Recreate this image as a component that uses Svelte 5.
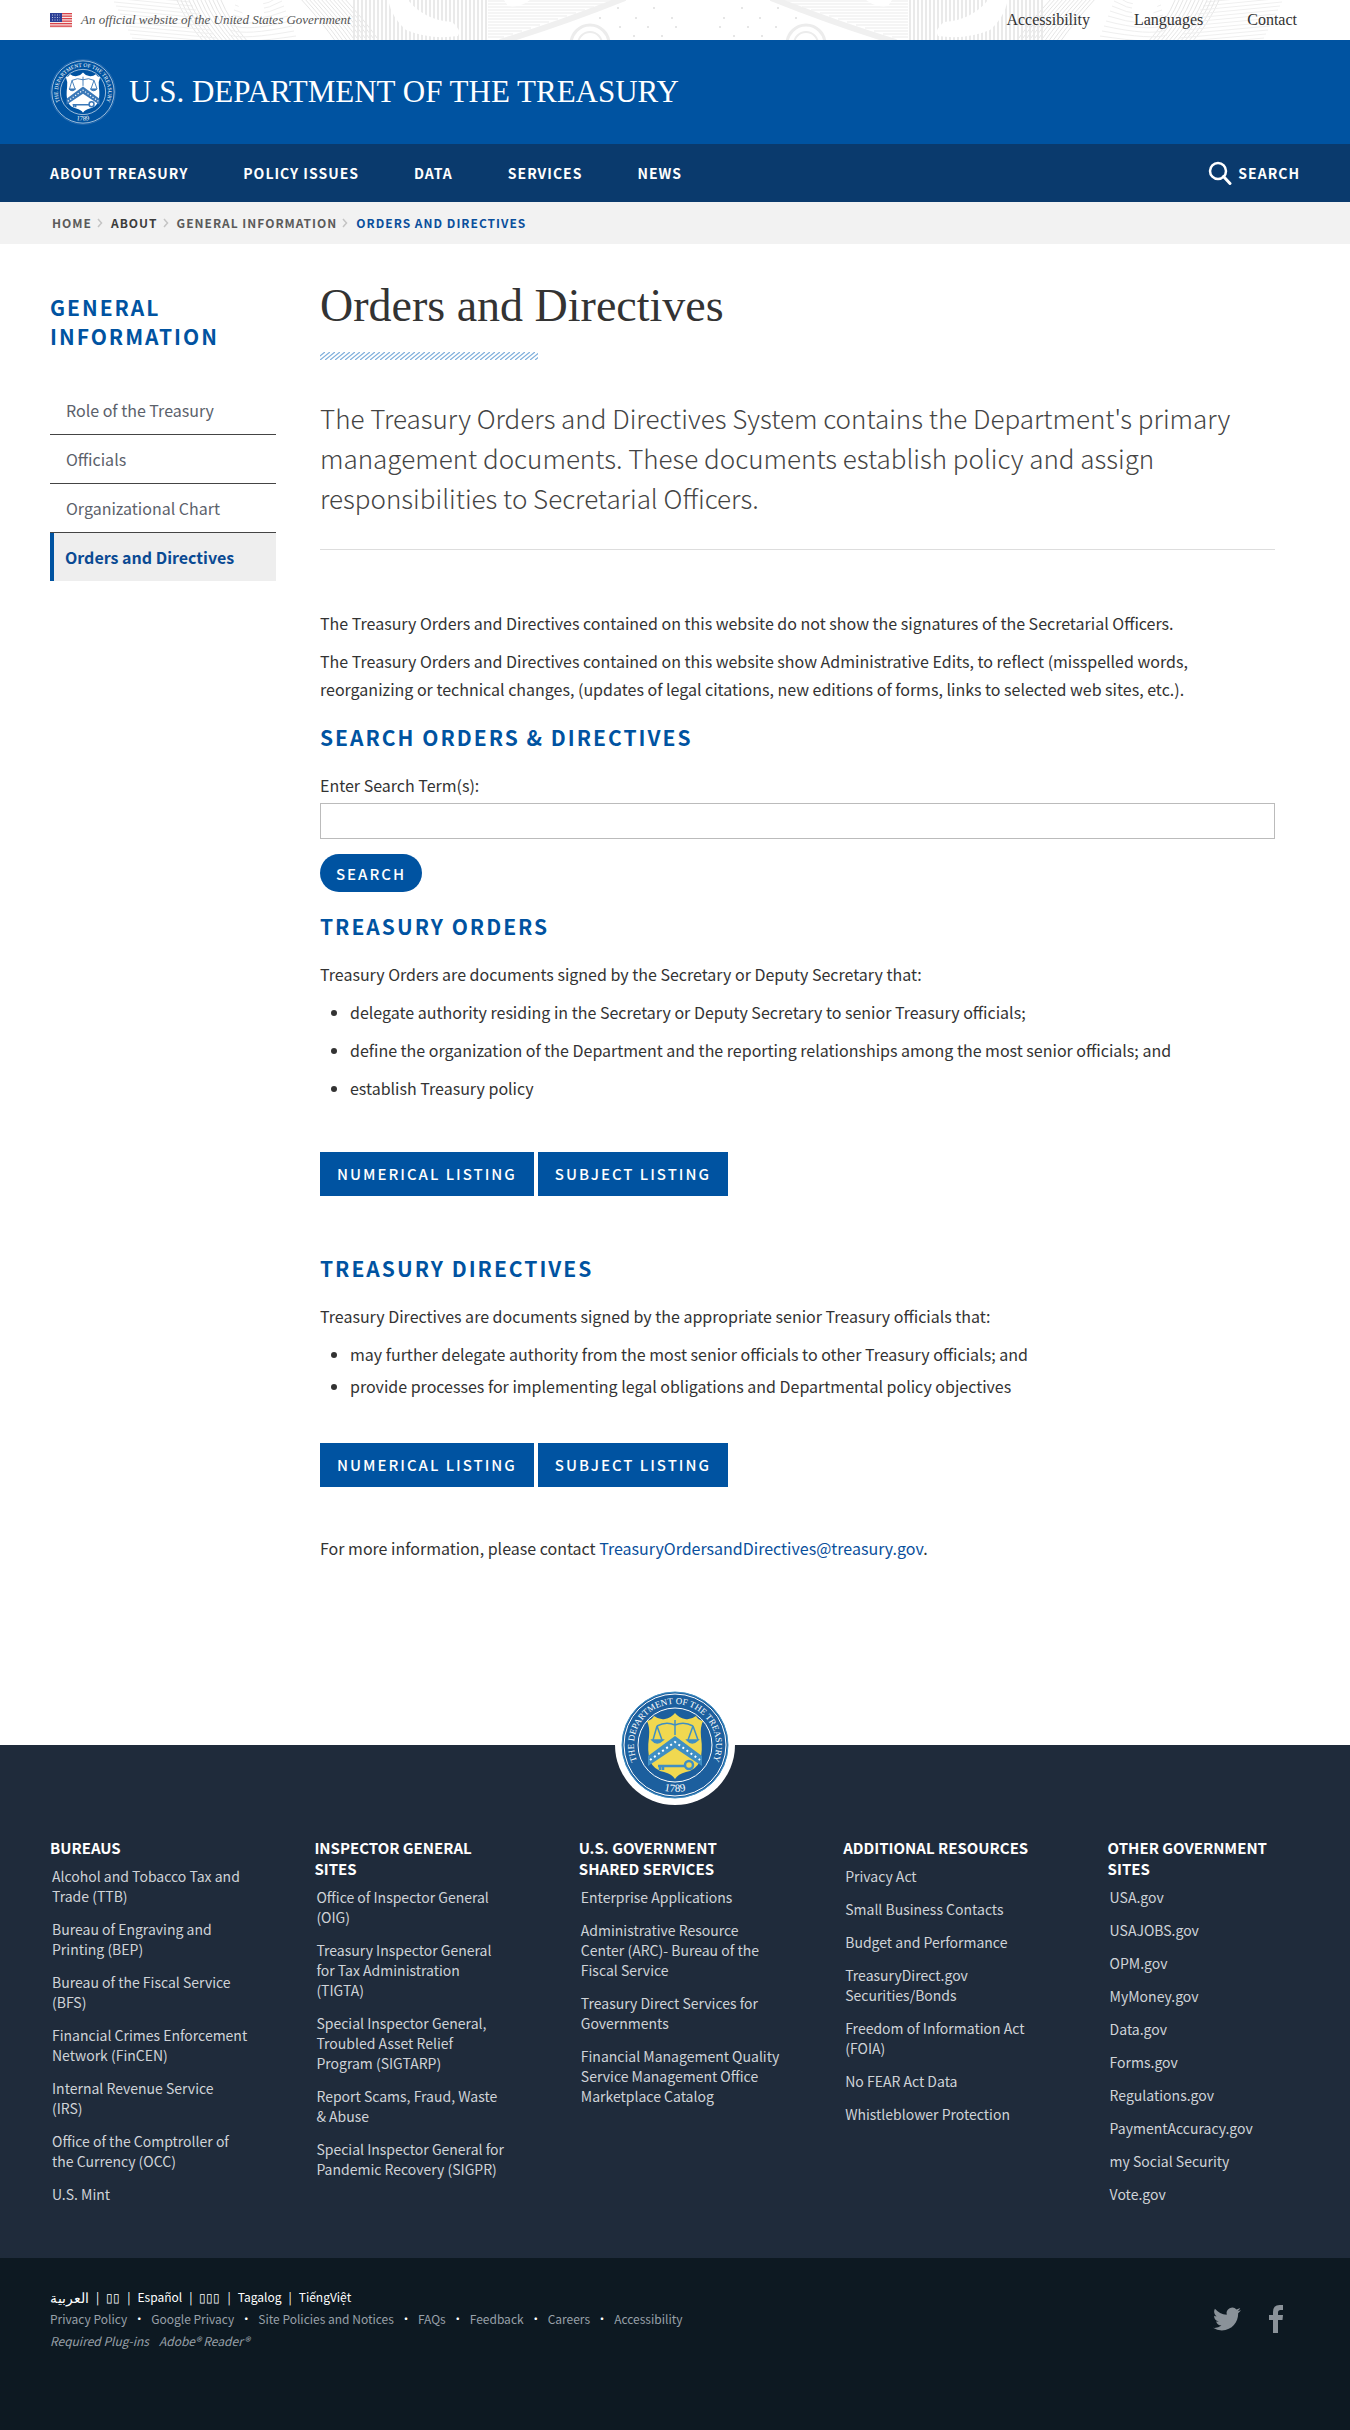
<script>
  const utility = ['Accessibility', 'Languages', 'Contact'];
  const nav = ['About Treasury', 'Policy Issues', 'Data', 'Services', 'News'];
  const crumbs = ['Home', 'About', 'General Information'];
  const side = ['Role of the Treasury', 'Officials', 'Organizational Chart', 'Orders and Directives'];
  const columns = [
    { title: 'Bureaus', links: ['Alcohol and Tobacco Tax and\nTrade (TTB)', 'Bureau of Engraving and\nPrinting (BEP)', 'Bureau of the Fiscal Service\n(BFS)', 'Financial Crimes Enforcement\nNetwork (FinCEN)', 'Internal Revenue Service\n(IRS)', 'Office of the Comptroller of\nthe Currency (OCC)', 'U.S. Mint'] },
    { title: 'Inspector General\nSites', links: ['Office of Inspector General\n(OIG)', 'Treasury Inspector General\nfor Tax Administration\n(TIGTA)', 'Special Inspector General,\nTroubled Asset Relief\nProgram (SIGTARP)', 'Report Scams, Fraud, Waste\n& Abuse', 'Special Inspector General for\nPandemic Recovery (SIGPR)'] },
    { title: 'U.S. Government\nShared Services', links: ['Enterprise Applications', 'Administrative Resource\nCenter (ARC)- Bureau of the\nFiscal Service', 'Treasury Direct Services for\nGovernments', 'Financial Management Quality\nService Management Office\nMarketplace Catalog'] },
    { title: 'Additional Resources', links: ['Privacy Act', 'Small Business Contacts', 'Budget and Performance', 'TreasuryDirect.gov\nSecurities/Bonds', 'Freedom of Information Act\n(FOIA)', 'No FEAR Act Data', 'Whistleblower Protection'] },
    { title: 'Other Government\nSites', links: ['USA.gov', 'USAJOBS.gov', 'OPM.gov', 'MyMoney.gov', 'Data.gov', 'Forms.gov', 'Regulations.gov', 'PaymentAccuracy.gov', 'my Social Security', 'Vote.gov'] }
  ];
  const languages = ['العربية', '▯▯', 'Español', '▯▯▯', 'Tagalog', 'TiếngViệt'];
  const policies = ['Privacy Policy', 'Google Privacy', 'Site Policies and Notices', 'FAQs', 'Feedback', 'Careers', 'Accessibility'];
  const range = (n) => Array.from({ length: n }, (_, i) => i);
</script>

{#snippet seal(id, ring, ink, shield, mark)}
  <svg class="seal" viewBox="0 0 108 108" aria-hidden="true">
    <defs>
      <path id="{id}-top" d="M25 83 A41 41 0 1 1 83 83" />
      <path id="{id}-low" d="M35 97 A47 47 0 0 0 73 97" />
    </defs>
    <circle cx="54" cy="54" r="53" fill={ring} stroke={mark} stroke-width="1" />
    <circle cx="54" cy="54" r="51" fill="none" stroke={ink} stroke-width="1" />
    <circle cx="54" cy="54" r="37" fill="none" stroke={ink} stroke-width="1" />
    <text class="seal-text" fill={ink}><textPath href="#{id}-top" startOffset="50%" text-anchor="middle">THE DEPARTMENT OF THE TREASURY</textPath></text>
    <text class="seal-year" fill={ink}><textPath href="#{id}-low" startOffset="50%" text-anchor="middle">1789</textPath></text>
    <path fill={shield} d="M26 30 Q31 29 33 25 Q38 29 44 28 Q50 27 54 22 Q58 27 64 28 Q70 29 75 25 Q77 29 82 30 Q79 36 80 46 Q82 60 79 70 Q75 79 65 81 Q57 83 54 88 Q51 83 43 81 Q33 79 29 70 Q26 60 28 46 Q29 36 26 30Z" />
    <path fill={mark} d="M54 45 L81 65 V75 L54 57 L27 75 V65Z" />
    <path fill="none" stroke={ink} stroke-width="2" stroke-dasharray="2 3" d="M29 69 L54 51 L79 69" />
    <g fill="none" stroke={mark} stroke-width="1.500">
      <path d="M36 35 Q45 30 54 34 Q63 30 72 35 M54 29 V44 M36 35 L32 49 M36 35 L41 49 M72 35 L67 49 M72 35 L77 49" />
      <path d="M31 49 H42 Q36 55 31 49Z M66 49 H77 Q71 55 66 49Z" fill={mark} />
      <path d="M37 75 H64 M39 75 V79 M42 75 V79" stroke-width="2.500" />
      <circle cx="68" cy="74" r="4" stroke-width="2.500" />
    </g>
  </svg>
{/snippet}

{#snippet engravingHalf()}
  <g fill="none" stroke="#e6e6e6">
    {#each range(12) as i}
      <path d="M{110 + i * 2} {i * 4 - 6} L{190 + i * 3} {i * 4 + 2}" stroke="#f0f0f0" />
      <path d="M{176 + i * 4} -2 Q{186 + i * 4} 22 {204 + i * 4} 42" />
      <path d="M{300 + i * 4} -2 Q{322 + i * 4} 22 {336 + i * 4} 42" />
    {/each}
    {#each range(9) as i}
      <path d="M{236 - i} {i * 5} Q{258 - i * 2} {i * 4 + 12} {280 + i * 2} {i * 5 - 4}" stroke="#efefef" />
    {/each}
    {#each range(34) as i}
      <path d="M{354 + i * 4} 0 V40" stroke="#eaeaea" stroke-width="2" />
    {/each}
    {#each range(13) as i}
      <path d="M488 {i * 3 + 1} H{612 - i * 9}" stroke="#ebebeb" />
    {/each}
    <path d="M500 42 Q560 24 625 -2" stroke="#f0f0f0" stroke-width="6" />
    <circle cx="590" cy="44" r="19" stroke-width="3" stroke="#ececec" />
    <circle cx="590" cy="44" r="12" stroke-width="2" stroke="#ececec" />
  </g>
  <g fill="#ffffff">
    <path d="M388 0 H408 Q424 20 452 22 Q462 30 458 36 Q430 40 406 30 Q392 18 388 0Z" />
    <path d="M504 0 H530 Q520 8 508 6Z M236 0 H262 Q268 14 258 26 Q242 18 236 0Z" />
  </g>
  <g fill="#dedede">
    {#each range(5) as i}
      <circle cx={600 + i * 18} cy={i % 2 ? 8 : 18} r="1" />
      <circle cx={620 + i * 14} cy={i % 2 ? 36 : 27} r="1" />
    {/each}
  </g>
{/snippet}

<div class="topbar">
  <svg class="engraving" viewBox="0 0 1350 40" preserveAspectRatio="xMidYMid slice" aria-hidden="true">
    {@render engravingHalf()}
    <g transform="translate(1396 0) scale(-1 1)">{@render engravingHalf()}</g>
  </svg>
  <div class="wrap topbar-row">
    <p class="official">
      <svg class="flag" viewBox="0 0 22 15" aria-hidden="true">
        <rect width="22" height="15" fill="#f7e9e6" />
        {#each range(6) as i}
          <rect y={i * 2.5} width="22" height="1.300" fill="#d9434a" />
        {/each}
        <rect width="12" height="9" fill="#2c3f96" />
        <path d="M2 2h8M2 4.500h8M2 7h8" stroke="#ffffff" stroke-width=".7" stroke-dasharray="1 1.500" />
      </svg>
      An official website of the United States Government
    </p>
    <nav class="utility" aria-label="Utility">
      {#each utility as item}<a href="#top">{item}</a>{/each}
    </nav>
  </div>
</div>

<header class="masthead">
  <a class="wrap brand" href="#top">
    {@render seal('crest', '#0053a1', '#ffffff', '#ffffff', '#3a78b8')}
    <span>U.S. DEPARTMENT OF THE TREASURY</span>
  </a>
</header>

<nav class="mainnav" aria-label="Main">
  <div class="wrap mainnav-row">
    {#each nav as item}<a href="#top">{item}</a>{/each}
    <button class="find" type="button">
      <svg viewBox="0 0 24 24" aria-hidden="true"><circle cx="10" cy="10" r="8" fill="none" stroke="currentColor" stroke-width="2.500" /><path d="M15.500 15.500 L22 22.500" stroke="currentColor" stroke-width="3" stroke-linecap="round" /></svg>
      Search
    </button>
  </div>
</nav>

<nav class="crumbs" aria-label="Breadcrumb">
  <ol class="wrap">
    {#each crumbs as item, i}
      <li class:dark={i === 1}><a href="#top">{item}</a><svg viewBox="0 0 6 10" aria-hidden="true"><path d="M1 1 L4.500 5 L1 9" fill="none" stroke="#c4c4c4" stroke-width="1.500" /></svg></li>
    {/each}
    <li class="here" aria-current="page">Orders and Directives</li>
  </ol>
</nav>

<div class="wrap body">
  <aside>
    <h2>General Information</h2>
    <ul>
      {#each side as item, i}
        <li><a class:active={i === 3} href="#top">{item}</a></li>
      {/each}
    </ul>
  </aside>

  <main>
    <h1>Orders and Directives</h1>
    <svg class="hatch" aria-hidden="true">
      <defs><pattern id="hatching" width="5" height="8" patternUnits="userSpaceOnUse"><path d="M-5 8 L5 0 M0 8 L10 0" stroke="#7fafdc" stroke-width="1.300" /></pattern></defs>
      <rect width="100%" height="100%" fill="url(#hatching)" />
    </svg>
    <p class="lede">The Treasury Orders and Directives System contains the Department's primary management documents. These documents establish policy and assign responsibilities to Secretarial Officers.</p>
    <hr />
    <p>The Treasury Orders and Directives contained on this website do not show the signatures of the Secretarial Officers.</p>
    <p>The Treasury Orders and Directives contained on this website show Administrative Edits, to reflect (misspelled words, reorganizing or technical changes, (updates of legal citations, new editions of forms, links to selected web sites, etc.).</p>

    <h2>Search Orders &amp; Directives</h2>
    <form onsubmit={(e) => e.preventDefault()}>
      <label for="terms">Enter Search Term(s):</label>
      <input id="terms" type="text" />
      <button class="pill" type="submit">Search</button>
    </form>

    <h2>Treasury Orders</h2>
    <p>Treasury Orders are documents signed by the Secretary or Deputy Secretary that:</p>
    <ul class="loose">
      <li>delegate authority residing in the Secretary or Deputy Secretary to senior Treasury officials;</li>
      <li>define the organization of the Department and the reporting relationships among the most senior officials; and</li>
      <li>establish Treasury policy</li>
    </ul>
    <div class="buttons"><a href="#top">Numerical Listing</a><a href="#top">Subject Listing</a></div>

    <h2>Treasury Directives</h2>
    <p>Treasury Directives are documents signed by the appropriate senior Treasury officials that:</p>
    <ul class="tight">
      <li>may further delegate authority from the most senior officials to other Treasury officials; and</li>
      <li>provide processes for implementing legal obligations and Departmental policy objectives</li>
    </ul>
    <div class="buttons"><a href="#top">Numerical Listing</a><a href="#top">Subject Listing</a></div>

    <p class="contact">For more information, please contact <a href="mailto:TreasuryOrdersandDirectives@treasury.gov">TreasuryOrdersandDirectives@treasury.gov</a>.</p>
  </main>
</div>

<footer>
  <div class="badge">{@render seal('medal', '#1c5f9e', '#ffffff', '#f0d850', '#3f8fc4')}</div>
  <div class="wrap columns">
    {#each columns as col}
      <section>
        <h3>{col.title}</h3>
        <ul>
          {#each col.links as link}<li><a href="#top">{link}</a></li>{/each}
        </ul>
      </section>
    {/each}
  </div>
  <div class="legal">
    <div class="wrap legal-row">
      <div>
        <p class="langs">{#each languages as item, i}{#if i}<span>|</span>{/if}<a class:arabic={i === 0} href="#top">{item}</a>{/each}</p>
        <p class="policies">{#each policies as item, i}{#if i}<span>•</span>{/if}<a href="#top">{item}</a>{/each}</p>
        <p class="plugins"><span>Required Plug-ins</span><a href="#top">Adobe® Reader®</a></p>
      </div>
      <div class="social">
        <a href="#top" aria-label="Twitter"><svg width="28" height="28" viewBox="0 0 24 24" aria-hidden="true"><path fill="currentColor" d="M23.950 4.570a10 10 0 0 1-2.820.770 4.960 4.960 0 0 0 2.160-2.720c-.95.550-2 .95-3.130 1.180a4.920 4.920 0 0 0-8.380 4.480C7.690 8.100 4.070 6.130 1.640 3.160a4.820 4.820 0 0 0-.67 2.480c0 1.710.87 3.210 2.190 4.100a4.900 4.900 0 0 1-2.230-.62v.06a4.920 4.920 0 0 0 3.950 4.830 5 5 0 0 1-2.210.08 4.940 4.940 0 0 0 4.600 3.420A9.870 9.870 0 0 1 0 19.540a13.990 13.990 0 0 0 7.560 2.210c9.050 0 14-7.500 14-13.980 0-.21 0-.42-.02-.63a9.940 9.940 0 0 0 2.460-2.550z" /></svg></a>
        <a href="#top" aria-label="Facebook"><svg width="14" height="28" viewBox="0 0 14 28" aria-hidden="true"><path fill="currentColor" d="M4 28 V15 H0 V10 H4 V7 Q4 0 10.500 0 H14 V5 H11.500 Q9 5 9 7.500 V10 H14 L13.500 15 H9 V28Z" /></svg></a>
      </div>
    </div>
  </div>
</footer>

<style>
  :global(body) { background: #ffffff; }
  :global(#app) { font-family: "Noto Sans CJK SC", "Noto Sans", sans-serif; font-size: 16px; line-height: 28px; color: #333333; }
  a { color: inherit; text-decoration: none; }
  h1, h2, h3, p, ul, ol { margin: 0; padding: 0; font-weight: 400; }
  ul, ol { list-style: none; }
  button { font-family: inherit; border: 0; cursor: pointer; }
  .wrap { box-sizing: border-box; padding-left: 50px; padding-right: 50px; }

  .topbar { position: relative; overflow: hidden; background: #ffffff; }
  .engraving { position: absolute; inset: 0; width: 100%; height: 100%; }
  .topbar-row { position: relative; display: flex; justify-content: space-between; align-items: center; height: 40px; padding-right: 53px; font-family: "Liberation Serif", serif; }
  .official { display: flex; align-items: center; gap: 9px; font-size: 13px; font-style: italic; color: #555555; }
  .flag { width: 22px; height: 15px; }
  .utility { display: flex; gap: 44px; font-size: 16px; color: #333333; }

  .masthead { background: #0053a1; color: #ffffff; }
  .brand { display: flex; align-items: center; gap: 13px; height: 104px; font-family: "Liberation Serif", serif; font-size: 31px; }
  .seal { display: block; width: 66px; height: 66px; }
  .seal-text { font-family: "Liberation Serif", serif; font-size: 9px; }
  .seal-year { font-family: "Liberation Serif", serif; font-size: 11px; }

  .mainnav { background: #0a3a6d; color: #ffffff; }
  .mainnav-row { display: flex; align-items: center; gap: 55px; height: 58px; font-size: 14px; font-weight: 700; letter-spacing: 1px; text-transform: uppercase; }
  .find { display: flex; align-items: center; gap: 6px; margin-left: auto; padding: 0; background: none; color: inherit; font-size: 14px; font-weight: 700; letter-spacing: 1px; text-transform: uppercase; }
  .find svg { width: 24px; height: 24px; }

  .crumbs { background: #f2f2f2; }
  .crumbs ol { display: flex; align-items: center; gap: 8px; height: 42px; padding-left: 52px; font-size: 12px; font-weight: 700; letter-spacing: 1px; text-transform: uppercase; color: #5b5b5b; }
  .crumbs li { display: flex; align-items: center; gap: 5px; }
  .crumbs svg { width: 6px; height: 10px; }
  .crumbs .dark { color: #3c3c3c; }
  .crumbs .here { color: #0a4f9c; }

  .body { display: grid; grid-template-columns: 226px 1fr; gap: 44px; padding-right: 75px; }
  aside { padding-top: 49px; }
  h2 { font-size: 21px; line-height: 29px; font-weight: 700; letter-spacing: 2px; text-transform: uppercase; color: #0053a1; }
  aside h2 { margin-bottom: 35px; }
  aside a { display: block; padding: 10px 16px; font-size: 16px; color: #5b616b; }
  aside li + li { border-top: 1px solid #444444; }
  aside .active { padding-left: 11px; border-left: 4px solid #0053a1; background: #eeeeee; color: #0a4a93; font-weight: 700; }

  main { padding-top: 34px; padding-bottom: 183px; }
  h1 { font-family: "Liberation Serif", serif; font-size: 46px; line-height: 56px; color: #333333; }
  .hatch { display: block; width: 218px; height: 8px; margin-top: 18px; }
  .lede { margin-top: 38px; font-size: 26px; line-height: 40px; font-weight: 300; color: #444444; }
  hr { margin: 31px 0 59px; border: 0; border-top: 1px solid #dddddd; }
  main p + p { margin-top: 10px; }
  main h2 { margin: 20px 0 19px; }
  form { display: flex; flex-direction: column; align-items: flex-start; }
  input { box-sizing: border-box; width: 100%; height: 36px; margin: 4px 0 15px; border: 1px solid #bbbbbb; background: #ffffff; font: inherit; }
  .pill { height: 38px; padding: 0 16px; border-radius: 19px; background: #0053a1; color: #ffffff; font-size: 15px; font-weight: 500; letter-spacing: 2px; text-transform: uppercase; }
  main ul { padding-left: 30px; list-style: disc; }
  .loose li { margin-top: 10px; }
  .tight { margin-top: 10px; }
  .tight li + li { margin-top: 4px; }
  .buttons { display: flex; gap: 4px; margin-top: 50px; }
  .tight + .buttons { margin-top: 43px; }
  .buttons + h2 { margin-top: 58px; }
  .buttons a { padding: 8px 17px; background: #0053a1; color: #ffffff; font-size: 15px; font-weight: 500; letter-spacing: 2px; text-transform: uppercase; }
  .contact { margin-top: 47px; }
  .contact a { color: #0a4f9c; }

  footer { position: relative; background: #1f2b3b; color: #ffffff; }
  .badge { position: absolute; top: 0; left: 50%; padding: 6px; border-radius: 50%; background: #ffffff; transform: translate(-50%, -50%); }
  .badge .seal { width: 108px; height: 108px; }
  .columns { display: grid; grid-template-columns: repeat(5, 1fr); gap: 50px; padding-top: 92px; padding-bottom: 54px; padding-right: 28px; white-space: pre-line; }
  h3 { font-size: 15px; line-height: 21px; font-weight: 700; text-transform: uppercase; }
  section ul { padding: 8px 0 0 2px; font-size: 14px; line-height: 20px; color: #cfd3d8; }
  section li + li { margin-top: 13px; }
  .legal { background: #0d1922; }
  .legal-row { display: flex; justify-content: space-between; padding-top: 28px; padding-bottom: 79px; padding-right: 67px; font-size: 12px; line-height: 22px; }
  .langs, .policies, .plugins { display: flex; align-items: center; gap: 7px; height: 22px; }
  .langs .arabic { font-size: 14px; }
  .policies { gap: 6px; }
  .plugins { gap: 10px; font-style: italic; }
  .policies a, .plugins { color: #98a0a8; }
  .social { display: flex; align-items: center; gap: 28px; color: #8a9299; }
  .social svg { display: block; }
</style>
